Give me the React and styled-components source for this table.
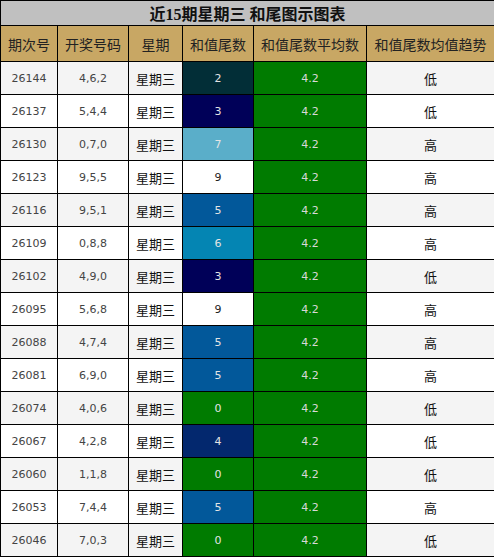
import React from "react";
import styled, { createGlobalStyle } from "styled-components";

const Global = createGlobalStyle`
  html, body { margin: 0; padding: 0; background: #fff; }
  body { font-family: "Liberation Serif", "Noto Sans CJK SC", serif; }
`;

const Table = styled.table`
  width: 494px;
  border-collapse: collapse;
  table-layout: fixed;
  font-family: "Liberation Serif", "Noto Sans CJK SC", serif;
`;

const TitleCell = styled.th`
  height: 24px;
  padding: 0;
  background: #c0c0c0;
  border: 1px solid #000;
  font-size: 16px;
  font-weight: bold;
  color: #111;
  text-align: center;
  vertical-align: middle;
`;

const HeadCell = styled.th`
  height: 35px;
  padding: 0;
  background: #c8a764;
  border: 1px solid #000;
  font-size: 14px;
  font-weight: normal;
  color: #222;
  text-align: center;
  vertical-align: middle;
  font-family: "Noto Sans CJK SC", sans-serif;
`;

const Row = styled.tr`
  background: ${(p) => (p.$alt ? "#f4f4f4" : "#ffffff")};
`;

const Cell = styled.td`
  height: 32px;
  padding: 0;
  border: 1px solid #000;
  text-align: center;
  vertical-align: middle;
  font-size: ${(p) => (p.$cjk ? "13px" : "11px")};
  font-family: ${(p) =>
    p.$cjk
      ? '"Noto Sans CJK SC", sans-serif'
      : '"DejaVu Sans", "Noto Sans CJK SC", sans-serif'};
  color: ${(p) => p.$fg || (p.$cjk ? "#111" : "#444")};
  background: ${(p) => p.$bg || "transparent"};
`;

const tailColors = {
  0: "#007b00",
  2: "#022e37",
  3: "#000058",
  4: "#03286e",
  5: "#02589a",
  6: "#0485b3",
  7: "#5aaec9",
  9: null,
};

const rows = [
  ["26144", "4,6,2", 2, "低"],
  ["26137", "5,4,4", 3, "低"],
  ["26130", "0,7,0", 7, "高"],
  ["26123", "9,5,5", 9, "高"],
  ["26116", "9,5,1", 5, "高"],
  ["26109", "0,8,8", 6, "高"],
  ["26102", "4,9,0", 3, "低"],
  ["26095", "5,6,8", 9, "高"],
  ["26088", "4,7,4", 5, "高"],
  ["26081", "6,9,0", 5, "高"],
  ["26074", "4,0,6", 0, "低"],
  ["26067", "4,2,8", 4, "低"],
  ["26060", "1,1,8", 0, "低"],
  ["26053", "7,4,4", 5, "高"],
  ["26046", "7,0,3", 0, "低"],
];

const widths = [57, 71, 54, 71, 113, 128];
const heads = ["期次号", "开奖号码", "星期", "和值尾数", "和值尾数平均数", "和值尾数均值趋势"];

export default function App() {
  return (
    <>
      <Global />
      <Table>
        <colgroup>
          {widths.map((w, i) => (
            <col key={i} style={{ width: w }} />
          ))}
        </colgroup>
        <thead>
          <tr>
            <TitleCell colSpan={6}>近15期星期三 和尾图示图表</TitleCell>
          </tr>
          <tr>
            {heads.map((h) => (
              <HeadCell key={h}>{h}</HeadCell>
            ))}
          </tr>
        </thead>
        <tbody>
          {rows.map(([issue, nums, tail, trend], i) => {
            const bg = tailColors[tail];
            return (
              <Row key={issue} $alt={i % 2 === 0}>
                <Cell>{issue}</Cell>
                <Cell>{nums}</Cell>
                <Cell $cjk>星期三</Cell>
                <Cell $bg={bg || "#fff"} $fg={bg ? "#e4e4e4" : "#222"}>
                  {tail}
                </Cell>
                <Cell $bg="#007b00" $fg="#d8d8d8">4.2</Cell>
                <Cell $cjk>{trend}</Cell>
              </Row>
            );
          })}
        </tbody>
      </Table>
    </>
  );
}
